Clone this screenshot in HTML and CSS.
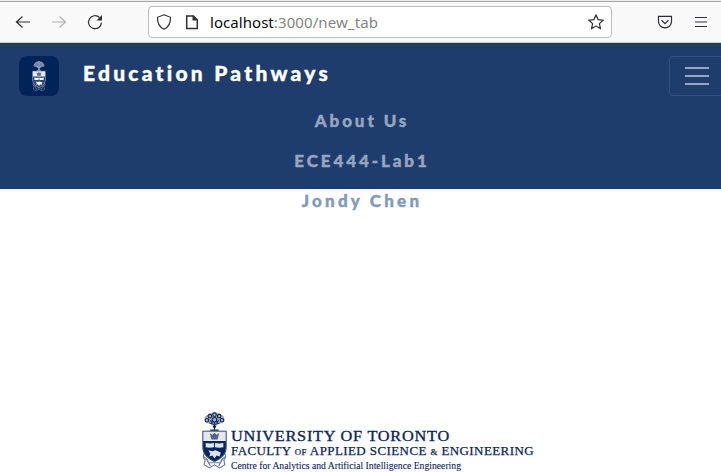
FILE: index.html
```html
<!DOCTYPE html>
<html lang="en">
<head>
<meta charset="utf-8">
<title>Education Pathways</title>
<link rel="stylesheet" href="styles.css">
</head>
<body>
<svg class="defs" aria-hidden="true">
  <symbol id="crest" viewBox="0 0 24 56">
    <path fill="currentColor" opacity=".35" d="M12 .5q4-.5 6 2 4 1 3.500 5-1 4-5 3.500l-4.500 1-4.500-1q-4 .5-5-3.500-.5-4 3.500-5 2-2.500 6-2z"/>
    <g fill="none" stroke="currentColor" stroke-width="1.1">
      <circle cx="12" cy="2.600" r="1.700"/><circle cx="7.500" cy="4" r="1.700"/><circle cx="16.500" cy="4" r="1.700"/>
      <circle cx="4.700" cy="8" r="1.700"/><circle cx="19.300" cy="8" r="1.700"/><circle cx="12" cy="7.500" r="2.200"/>
      <path d="M7 10.500q5 3 10 0M8 8l2 3M16 8l-2 3M12 10v8M10.500 13l1.500 3 1.500-3M8 17.500h8"/>
      <path d="M2 40q-2 4 1 6l-1 5 5 3 5-3 5 3 5-3-1-5q3-2 1-6M4 45l4 7M20 45l-4 7M6 49h12M2 43l4 4M22 43l-4 4" opacity=".6"/>
    </g>
    <path class="crest-shield" d="M.7 18.500h22.600V34c0 7-5 11-11.300 14C5.700 45 .7 41 .7 34z"/>
    <path class="crest-field" d="M1 28h22v6c0 7-5 11-11 13.500C6 45 1 41 1 34z"/>
    <path class="crest-crown" d="M7.500 20.500l2.500 1.500 2-2 2 2 2.500-1.500-1.500 6H9z"/>
    <path class="crest-charge" d="M3.500 30l4 .5 4-.5v4l-4 .5-4-.5zM12.500 30l4 .5 4-.5v4l-4 .5-4-.5zM6 37l4 1 3-1 5 2-1 4-3-1-2 3-2-3-3 1 1-3z"/>
  </symbol>
</svg>
<header class="toolbar">
  <svg class="back" viewBox="0 0 16 16"><path d="M15 8H1.500M7.500 2.500L1.500 8l6 5.500"/></svg>
  <svg class="forward" viewBox="0 0 16 16"><path d="M1 8h13.500M8.500 2.500l6 5.500-6 5.500"/></svg>
  <svg class="reload" viewBox="0 0 16 16"><path d="M12.500 3.500A6.500 6.500 0 1 0 14.500 8.500"/><path class="solid" d="M15 1v5.500H9.500z"/></svg>
  <div class="address">
    <svg class="shield" viewBox="0 0 16 16"><path d="M8 .8l6.500 2.500c.3 5-.8 9.200-6.500 12C2.300 12.500 1.200 8.300 1.500 3.300z"/></svg>
    <svg class="page" viewBox="0 0 16 16"><path d="M2.700 2h6.800l3.800 3.800v8.700H2.700z"/><path class="solid" d="M8.500 1.500V6.500h5z"/></svg>
    <span class="url"><b>localhost</b>:3000/new_tab</span>
    <svg class="star" viewBox="0 0 16 16"><path d="M8 1l2.100 4.600 5 .6-3.700 3.400 1 5L8 12.100l-4.400 2.500 1-5L.9 6.200l5-.6z"/></svg>
  </div>
  <svg class="pocket" viewBox="0 0 16 16"><path d="M1.500 2.300h13v5.500a6.500 6 0 0 1-13 0zM4.500 6.300L8 9.600l3.500-3.300"/></svg>
  <svg class="menu" viewBox="0 0 12 12"><path d="M0 1.500h12M0 6h12M0 10.500h12"/></svg>
</header>
<nav class="navbar">
  <div class="brand-row">
    <span class="badge"><svg class="badge-crest"><use href="#crest"/></svg></span>
    <span class="brand">Education Pathways</span>
    <button class="toggler" aria-label="Menu"><i></i><i></i><i></i></button>
  </div>
  <ul class="links">
    <li class="about">About Us</li>
    <li class="lab">ECE444-Lab1</li>
    <li class="author">Jondy Chen</li>
  </ul>
</nav>
<main>
  <div class="logo">
    <svg class="logo-crest"><use href="#crest"/></svg>
    <svg class="wordmark" viewBox="0 0 306 60">
      <text class="university" x="0" y="29" textLength="219" lengthAdjust="spacingAndGlyphs">UNIVERSITY OF TORONTO</text>
      <text class="faculty" x="0" y="43" textLength="303" lengthAdjust="spacingAndGlyphs">FACULTY <tspan class="small">OF</tspan> APPLIED SCIENCE <tspan class="small">&amp;</tspan> ENGINEERING</text>
      <text class="centre" x="0" y="56.500" textLength="230" lengthAdjust="spacingAndGlyphs">Centre for Analytics and Artificial Intelligence Engineering</text>
    </svg>
  </div>
</main>
</body>
</html>
```
FILE: styles.css
```css
* { box-sizing: border-box; }
body { margin: 0; height: 472px; overflow: hidden; background: #fff; font-family: "Liberation Sans", sans-serif; }
svg { display: block; flex: none; }
.defs { display: none; }

.toolbar {
  display: flex; align-items: center; height: 43px; padding: 1px 14px 0 15px;
  background: #f9f9fa; border-top: 1px solid #ececec; border-bottom: 1px solid #ccc;
  box-shadow: inset 0 1px #a5a5a5;
}
.toolbar svg { width: 16px; height: 16px; fill: none; stroke: #303034; stroke-width: 1.2; }
.toolbar .solid { fill: #303034; stroke: none; }
.toolbar .forward { margin-left: 20px; stroke: #b0b0b3; }
.toolbar .reload { margin-left: 20px; }
.address {
  display: flex; align-items: center; width: 464px; height: 32px; margin-left: 45px;
  padding: 0 7px; background: #fff; border: 1px solid #bdbdbf; border-radius: 4px;
}
.toolbar .page { margin-left: 12px; stroke-width: 1.5; }
.url { width: 169px; margin-left: 10px; font: 15px/20px "Noto Sans", sans-serif; letter-spacing: .1px; color: #858585; white-space: nowrap; }
.url b { font-weight: 400; color: #0c0c0d; letter-spacing: .05px; }
.toolbar .star { margin-left: auto; }
.toolbar .pocket { width: 16px; margin-left: 45px; }
.toolbar .menu { width: 12px; height: 12px; margin-left: 22px; }

.navbar { height: 146px; padding-top: 13px; background: #1e3d6d; font-family: Lato, sans-serif; font-weight: 900; -webkit-text-stroke: .4px; }
.brand-row { display: flex; height: 40px; padding-left: 19px; }
.badge { display: flex; align-items: center; justify-content: center; width: 40px; height: 40px; border-radius: 8px; background: #002359; }
.badge-crest { width: 14px; height: 31px; color: #c3cddd; --shield: #e6ebf2; --field: #29477a; --charge: #fff; --crown: #52698f; }
.brand { margin-left: 24px; color: #fff; font-size: 21px; line-height: 34px; letter-spacing: 3.25px; white-space: nowrap; }
.toggler {
  display: flex; flex-direction: column; justify-content: space-between; width: 56px; height: 40px;
  margin: 0 -4px 0 auto; padding: 10px 15px; background: none; border: 1px solid #35517d; border-radius: 4px;
}
.toggler i { width: 24px; height: 2px; background: #96a5bc; }
.links { margin: 5px 0 0; padding: 0 0 0 3px; list-style: none; text-align: center; font-size: 17px; line-height: 40px; color: #98a6bd; }
.about { letter-spacing: 2.9px; }
.lab { letter-spacing: 2.9px; }
.author { letter-spacing: 3.2px; color: #829abd; }

.logo { display: flex; width: 332px; margin: 223px 0 0 202px; color: #09265a; }
.logo-crest { width: 25px; height: 58px; --shield: #e3e8ef; --field: #09265a; --charge: #dce3ec; --crown: #506489; }
.crest-shield { fill: var(--shield); stroke: currentColor; stroke-width: .8; }
.crest-field { fill: var(--field); }
.crest-crown { fill: var(--crown); }
.crest-charge { fill: var(--charge); }
.wordmark { width: 306px; height: 60px; margin-left: 4px; fill: #09265a; font-family: "Liberation Serif", serif; }
.university { font-size: 15px; letter-spacing: .7px; stroke: #09265a; stroke-width: .35px; }
.faculty { font-size: 12.5px; letter-spacing: .4px; stroke: #09265a; stroke-width: .25px; }
.small { font-size: 8.5px; }
.centre { font-size: 10.5px; stroke: #09265a; stroke-width: .1px; }
```
